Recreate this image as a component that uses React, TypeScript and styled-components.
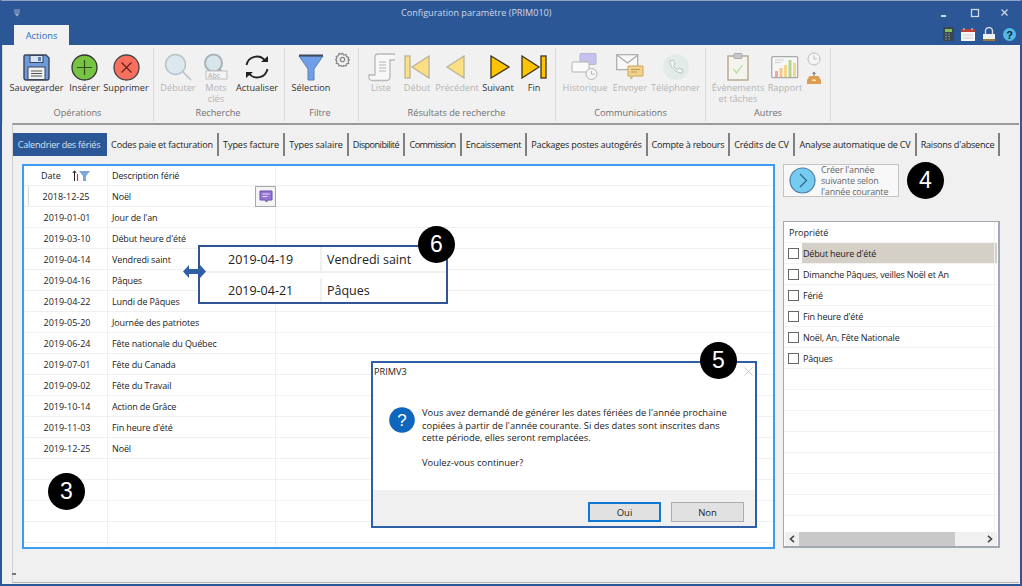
import React from "react";
import styled, { createGlobalStyle } from "styled-components";

const Global = createGlobalStyle`
  html, body { margin: 0; padding: 0; background: #f0f0f0; overflow: hidden; }
  #root { width: 1022px; height: 586px; }
  * { box-sizing: border-box; }
`;

const FONT = `"Open Sans", "Noto Sans", "Liberation Sans", sans-serif`;

const Page = styled.div`
  position: relative;
  width: 1022px;
  height: 586px;
  overflow: hidden;
  font-family: ${FONT};
  font-size: 9px;
  color: #222;
`;
const Win = styled.div`
  width: 100%;
  height: 100%;
  display: flex;
  flex-direction: column;
  background: #f0f0f0;
  border: 2px solid #2b5797;
  border-top: 1px solid #8fa3c4;
`;
const Header = styled.div`
  height: 44px;
  background: #2b5797;
  display: flex;
  flex-direction: column;
`;
const TitleRow = styled.div`
  height: 23px;
  display: flex;
  align-items: center;
  padding-left: 11px;
  color: #d5deec;
  position: relative;
`;
const Title = styled.div`
  margin-left: 380px;
  font-size: 9.1px;
  white-space: nowrap;
  color: #cfd9e8;
`;
const WinControls = styled.div`
  margin-left: auto;
  display: flex;
  align-items: center;
  gap: 16px;
  padding-right: 8px;
`;
const TabRow = styled.div`
  flex: 1;
  display: flex;
  align-items: flex-end;
  padding-left: 12px;
  padding-right: 4px;
`;
const ActionsTab = styled.div`
  width: 55px;
  height: 20px;
  background: #f1f1f1;
  color: #2b6fc4;
  font-size: 9.3px;
  display: flex;
  align-items: center;
  justify-content: center;
`;
const HelpIcons = styled.div`
  margin-left: auto;
  display: flex;
  gap: 7px;
  align-items: center;
  height: 20px;
  margin-bottom: 1px;
`;
const Ribbon = styled.div`
  height: 78px;
  background: #f1f1f1;
  display: flex;
  align-items: stretch;
  padding-left: 0;
  border-left: 1px solid #d8d8d8;
`;
const Group = styled.div<{ $w: number; $pl: number }>`
  width: ${(p) => p.$w}px;
  padding-left: ${(p) => p.$pl}px;
  margin: 3px 0 2px;
  border-right: 1px solid #dcdcdc;
  display: flex;
  flex-direction: column;
`;
const GroupButtons = styled.div`
  height: 58px;
  padding-top: 4px;
  display: flex;
`;
const GroupLabel = styled.div`
  flex: 1;
  text-align: center;
  color: #707070;
  font-size: 9.2px;
  line-height: 14px;
  margin-left: -6px;
`;
const RibbonBtn = styled.div<{ $w: number; $off?: boolean }>`
  width: ${(p) => p.$w}px;
  display: flex;
  flex-direction: column;
  align-items: center;
  color: ${(p) => (p.$off ? "#b4b4b4" : "#333")};
`;
const IconBox = styled.div`
  height: 30px;
  width: 30px;
  display: flex;
  align-items: center;
  justify-content: center;
  flex: none;
`;
const BtnLabel = styled.div`
  font-size: 9.2px;
  line-height: 11px;
  text-align: center;
  margin-top: 0;
  white-space: pre;
`;
const SmallCol = styled.div<{ $w: number }>`
  width: ${(p) => p.$w}px;
  display: flex;
  flex-direction: column;
  align-items: center;
  gap: 6px;
`;
const Body = styled.div`
  flex: 1;
  margin-left: 10px;
  margin-right: 1px;
  border-top: 2px solid #9a9a9a;
  border-bottom: 1px solid #b0b0b0;
  margin-bottom: 1px;
  min-height: 0;
  display: flex;
  flex-direction: column;
  position: relative;
  border-left: 1px solid #cfcfcf;
`;
const TabStrip = styled.div`
  margin-top: 8px;
  height: 23px;
  display: flex;
  flex: none;
`;
const TabItem = styled.div<{ $w: number; $ls: number; $active?: boolean }>`
  width: ${(p) => p.$w}px;
  display: flex;
  align-items: center;
  justify-content: center;
  white-space: nowrap;
  font-size: 9.1px;
  letter-spacing: ${(p) => p.$ls}px;
  background: ${(p) => (p.$active ? "#2b5797" : "transparent")};
  color: ${(p) => (p.$active ? "#d8e2f0" : "#222")};
  border-right: 2px solid ${(p) => (p.$active ? "#2b5797" : "#808080")};
`;
const Content = styled.div`
  padding: 8px 0 0 9px;
  display: flex;
  gap: 8px;
`;
const StatusMark = styled.div`
  position: absolute;
  left: -1px;
  bottom: 7px;
  width: 4px;
  height: 2px;
  background: #777;
`;
const TableFrame = styled.div`
  width: 753px;
  height: 385px;
  border: 2px solid #3c9cf2;
  background: #fff;
  overflow: hidden;
`;
const Row = styled.div<{ $h?: number }>`
  height: ${(p) => p.$h ?? 21}px;
  display: flex;
  border-bottom: 1px solid #f0f0f0;
`;
const DateCell = styled.div<{ $mark?: boolean }>`
  width: 84px;
  flex: none;
  display: flex;
  align-items: center;
  justify-content: center;
  padding-left: 3px;
  border-right: 1px solid #f0f0f0;
  position: relative;
  font-size: 9px;
  ${(p) => p.$mark && `padding-left: 1px; &::before { content: ""; position: absolute; left: 4px; top: 0; bottom: 0; width: 1px; background: #d8d8d8; }`}
`;
const DescCell = styled.div`
  width: 168px;
  flex: none;
  display: flex;
  align-items: center;
  padding-left: 4px;
  border-right: 1px solid #f0f0f0;
  position: relative;
  font-size: 9px;
  letter-spacing: -0.13px;
`;
const HeadDate = styled(DateCell)`
  justify-content: flex-start;
  padding-left: 17px;
  gap: 11px;
`;
const NoteButton = styled.div`
  position: absolute;
  right: -1px;
  top: 0;
  width: 21px;
  height: 21px;
  border: 1px solid #a8a8a8;
  background: #f4f4f4;
  display: flex;
  align-items: center;
  justify-content: center;
`;
const Side = styled.div`
  width: 217px;
  display: flex;
  flex-direction: column;
  gap: 24px;
`;
const CreateBtn = styled.div`
  width: 116px;
  height: 33px;
  border: 1px solid #c4c4c4;
  background: #f8f8f8;
  display: flex;
  align-items: center;
  gap: 5px;
  padding-left: 5px;
  color: #666;
  font-size: 9px;
  letter-spacing: -0.2px;
  line-height: 11px;
`;
const ListBox = styled.div`
  width: 217px;
  height: 327px;
  border: 1px solid #a2a9b2;
  border-bottom-width: 2px;
  border-right-width: 2px;
  background: #fff;
  display: flex;
  flex-direction: column;
  position: relative;
`;
const ListRows = styled.div`
  flex: 1;
  overflow: hidden;
  position: relative;
  margin-right: 1px;
  &::after {
    content: "";
    position: absolute;
    top: 0;
    bottom: 0;
    right: 2px;
    width: 1px;
    background: #f0f0f0;
  }
`;
const ListHead = styled.div`
  height: 21px;
  display: flex;
  align-items: center;
  padding-left: 5px;
  font-size: 9px;
  border-bottom: 1px solid #f4f4f4;
`;
const ListRow = styled.div`
  height: 21px;
  display: flex;
  align-items: center;
  padding-left: 4px;
  gap: 3px;
  border-bottom: 1px solid #f2f2f2;
`;
const Check = styled.span`
  width: 11px;
  height: 11px;
  flex: none;
  border: 1px solid #666;
  background: #fff;
`;
const ListText = styled.span<{ $sel?: boolean }>`
  flex: 1;
  height: 20px;
  display: flex;
  align-items: center;
  padding-left: 1px;
  font-size: 9px;
  letter-spacing: -0.18px;
  background: ${(p) => (p.$sel ? "#d4d0c8" : "transparent")};
`;
const ScrollBar = styled.div`
  height: 14px;
  background: #f0f0f0;
  display: flex;
  align-items: center;
  flex: none;
  margin: 0 1px;
`;
const ScrollArrow = styled.div`
  width: 14px;
  display: flex;
  align-items: center;
  justify-content: center;
  flex: none;
`;
const ScrollThumb = styled.div`
  width: 156px;
  height: 14px;
  background: #c9c9c9;
`;
const ScrollRest = styled.div`
  flex: 1;
`;
const Badge = styled.div<{ $x: number; $y: number }>`
  position: absolute;
  left: ${(p) => p.$x - 18}px;
  top: ${(p) => p.$y - 18}px;
  width: 37px;
  height: 37px;
  border-radius: 50%;
  background: #000;
  color: #fff;
  font-family: "Liberation Sans", Arial, sans-serif;
  font-size: 23px;
  display: flex;
  align-items: center;
  justify-content: center;
  z-index: 5;
`;
const Callout = styled.div`
  position: absolute;
  left: 198px;
  top: 245px;
  width: 250px;
  height: 59px;
  background: #fff;
  border: 2px solid #2f5597;
  z-index: 3;
  display: flex;
  flex-direction: column;
`;
const CalloutRow = styled.div`
  flex: 1;
  display: flex;
  font-size: 12.5px;
  &:first-child {
    border-bottom: 2px solid #f0f0f0;
  }
  &:last-child {
    padding-top: 5px;
  }
`;
const CalloutDate = styled.div`
  width: 122px;
  border-right: 2px solid #f0f0f0;
  display: flex;
  align-items: center;
  padding-left: 28px;
`;
const CalloutDesc = styled.div`
  display: flex;
  align-items: center;
  padding-left: 5px;
`;
const ArrowWrap = styled.div`
  position: absolute;
  left: 183px;
  top: 265px;
  z-index: 4;
  line-height: 0;
`;
const Dialog = styled.div`
  position: absolute;
  left: 371px;
  top: 361px;
  width: 386px;
  height: 167px;
  background: #fff;
  border: 2px solid #2f5fa5;
  z-index: 3;
  display: flex;
  flex-direction: column;
`;
const DlgTitle = styled.div`
  height: 16px;
  flex: none;
  display: flex;
  align-items: center;
  justify-content: space-between;
  padding: 0 2px 0 1px;
  font-size: 9.2px;
`;
const DlgBody = styled.div`
  flex: 1;
  display: flex;
  padding: 28px 0 0 16px;
  gap: 7px;
`;
const DlgText = styled.div`
  font-size: 9.4px;
  line-height: 12.6px;
  white-space: pre;
`;
const DlgFooter = styled.div`
  height: 36px;
  flex: none;
  background: #f0f0f0;
  display: flex;
  justify-content: flex-end;
  gap: 10px;
  padding: 12px 11px 0 0;
`;
const DlgBtn = styled.div<{ $primary?: boolean }>`
  width: 73px;
  height: 20px;
  background: #e1e1e1;
  border: ${(p) => (p.$primary ? "2px solid #0f78d4" : "1.5px solid #adadad")};
  display: flex;
  align-items: center;
  justify-content: center;
  font-size: 9.5px;
`;

const Save = () => (
  <svg width="27" height="27" viewBox="0 0 27 27">
    <path d="M2 1h21l3 3v20a2 2 0 0 1-2 2H3a2 2 0 0 1-2-2V2z" fill="#6e9bdc" stroke="#39465c" strokeWidth="1.4" />
    <rect x="7" y="1.5" width="13" height="7" fill="#d9e4f2" stroke="#39465c" />
    <rect x="15" y="3" width="3" height="4" fill="#5a7fb0" />
    <rect x="5" y="13" width="17" height="12.5" fill="#f2f2f2" stroke="#39465c" />
    <path d="M8 17h11M8 19.5h11M8 22h11" stroke="#555" />
  </svg>
);
const Plus = () => (
  <svg width="27" height="27" viewBox="0 0 27 27">
    <circle cx="13.5" cy="13.5" r="12.5" fill="#76c442" stroke="#333" strokeWidth="1.3" />
    <path d="M13.5 6v15M6 13.5h15" stroke="#2d4d1a" strokeWidth="1.2" />
  </svg>
);
const Cross = () => (
  <svg width="27" height="27" viewBox="0 0 27 27">
    <circle cx="13.5" cy="13.5" r="12.5" fill="#f76f5e" stroke="#444" strokeWidth="1.3" />
    <path d="M8.5 8.5l10 10M18.5 8.5l-10 10" stroke="#5c2018" strokeWidth="1.1" />
  </svg>
);
const Mag = () => (
  <svg width="28" height="28" viewBox="0 0 28 28">
    <circle cx="11.5" cy="11.5" r="10" fill="#dbe9ee" stroke="#b5c3c9" strokeWidth="1.4" />
    <path d="M18.5 18.5L27 27" stroke="#bdbdbd" strokeWidth="1.4" />
  </svg>
);
const MagAbc = () => (
  <svg width="28" height="28" viewBox="0 0 28 28">
    <circle cx="11.5" cy="10" r="8.5" fill="#d8e6ec" stroke="#a9b3b8" strokeWidth="2" />
    <path d="M17 16l7 7" stroke="#a8a8a8" strokeWidth="2.4" />
    <rect x="4" y="18" width="21" height="8" fill="#f4f4f4" stroke="#c0c0c0" />
    <text x="6" y="25" fontSize="7" fill="#aaa" fontFamily="Open Sans">Abc</text>
  </svg>
);
const Refresh = () => (
  <svg width="26" height="26" viewBox="0 0 26 26" fill="none">
    <path d="M2.5 11A10.5 10.5 0 0 1 21 6.5" stroke="#222" strokeWidth="1.8" />
    <path d="M23.5 15A10.5 10.5 0 0 1 5 19.5" stroke="#222" strokeWidth="1.8" />
    <path d="M17 8h7V2z" fill="#222" />
    <path d="M9 18H2v6z" fill="#222" />
  </svg>
);
const Funnel = () => (
  <svg width="26" height="27" viewBox="0 0 26 27">
    <path d="M1 2h24l-9 13v11h-6V15z" fill="#6f9fe6" stroke="#5a7fb5" />
    <path d="M1 1.5h24" stroke="#3c4a5e" strokeWidth="2" />
  </svg>
);
const Gear = () => (
  <svg width="15" height="15" viewBox="0 0 24 24" fill="none" stroke="#888" strokeWidth="2">
    <circle cx="12" cy="12" r="3.5" />
    <path d="M12 2l2 3 3.5-1 1 3.5 3.5 1-1 3.5 2 .5-2 2 1 3.5-3.500 1-1 3.500-3.500-1-2 3-2-3-3.500 1-1-3.500-3.500-1 1-3.500-2-2 2-2.500-1-3 3.500-1 1-3.500 3.500 1z" />
  </svg>
);
const Scroll = () => (
  <svg width="27" height="29" viewBox="0 0 27 29" fill="none" stroke="#b8b8b8" strokeWidth="1.3">
    <path d="M7 22V4a3 3 0 0 1 3-3h15a2 2 0 0 1 0 6h-3v17a3.500 3.500 0 0 1-3.500 3.500H4A3 3 0 0 1 1 24.500V22z" fill="#f8f8f8" />
    <path d="M11 9h7M11 12h7M11 15h7M11 18h7" stroke="#ccc" />
  </svg>
);
const Nav = ({ kind, dim }: { kind: "first" | "prev" | "next" | "last"; dim?: boolean }) => {
  const fill = dim ? "#fbdf85" : "#ffc300";
  const stroke = dim ? "#b9b39a" : "#3d3518";
  return (
    <svg width="26" height="24" viewBox="0 0 26 24" stroke={stroke} strokeWidth="1.3" fill={fill}>
      {kind === "first" && (<><rect x="1" y="1" width="5" height="22" /><path d="M25 1L8 12l17 11z" /></>)}
      {kind === "prev" && <path d="M20 1L3 12l17 11z" />}
      {kind === "next" && <path d="M6 1l18 11L6 23z" />}
      {kind === "last" && (<><path d="M1 1l17 11L1 23z" /><rect x="20" y="1" width="5" height="22" /></>)}
    </svg>
  );
};
const History = () => (
  <svg width="28" height="28" viewBox="0 0 28 28">
    <rect x="9" y="0.500" width="16" height="11" rx="1" fill="#c6c2ee" stroke="#b8b8d0" />
    <rect x="1" y="9" width="17" height="10" rx="1" fill="#fafafa" stroke="#b3b3b3" />
    <circle cx="20.500" cy="21" r="5.500" fill="#f5f5f5" stroke="#b3b3b3" />
    <path d="M20.500 18v3h3" stroke="#b3b3b3" fill="none" />
  </svg>
);
const Mail = () => (
  <svg width="28" height="26" viewBox="0 0 28 26">
    <rect x="0.700" y="0.700" width="21" height="15" fill="#f8f8f8" stroke="#aaa" strokeWidth="1.2" />
    <path d="M1 1l10.500 8L22 1" stroke="#aaa" fill="none" strokeWidth="1.200" />
    <path d="M12 12h15v10H17l-2 3v-3h-3z" fill="#f3d28c" stroke="#c9a65a" />
    <path d="M15 15.500h9M15 18h6" stroke="#b89a5a" />
  </svg>
);
const Phone = () => (
  <svg width="26" height="26" viewBox="0 0 26 26">
    <circle cx="13" cy="13" r="13" fill="#e3ebe9" />
    <path d="M7 7l3-1 2 4-1.500 1.500c.8 2 2.200 3.400 4 4.200L16 14l4 2-1 3c-5 .5-12.500-6-12-12z" fill="#f6f8f7" stroke="#b9c2c0" />
  </svg>
);
const Clipboard = () => (
  <svg width="22" height="28" viewBox="0 0 22 28">
    <rect x="1" y="3" width="20" height="24" fill="#f5f3ee" stroke="#bfae98" strokeWidth="1.600" />
    <rect x="7" y="0.500" width="8" height="5" rx="1" fill="#c4c8cc" stroke="#aaa" />
    <path d="M6.500 16l3 4 6-8" stroke="#a7dc93" strokeWidth="1.200" fill="none" />
  </svg>
);
const ReportIcon = () => (
  <svg width="28" height="23" viewBox="0 0 28 23">
    <rect x="0.700" y="0.700" width="26" height="21" rx="1" fill="#f6f6f6" stroke="#aaa" strokeWidth="1.300" />
    <path d="M4 4h9M4 6.500h6" stroke="#ccc" />
    <rect x="4" y="15" width="3" height="6" fill="#eba7a0" />
    <rect x="8.500" y="12" width="3" height="9" fill="#f2c78c" />
    <rect x="13" y="9" width="3" height="12" fill="#f2d88a" />
    <rect x="17.500" y="4" width="3" height="17" fill="#b5d690" />
    <rect x="22" y="7" width="3" height="14" fill="#f2d88a" />
  </svg>
);
const Clock = () => (
  <svg width="14" height="14" viewBox="0 0 14 14" fill="none" stroke="#bbb">
    <circle cx="7" cy="7" r="6" fill="#f5f5f5" />
    <path d="M7 3.500V7h3" />
  </svg>
);
const Tray = () => (
  <svg width="14" height="12" viewBox="0 0 14 12">
    <path d="M7 0v4M5.500 2L7 .5 8.500 2" stroke="#666" fill="none" />
    <path d="M2.500 4h9L14 8v4H0V8z" fill="#dd9f4f" />
    <rect x="5" y="7.500" width="4" height="1.500" fill="#fbe4c0" />
  </svg>
);
const SortFilter = () => (
  <svg width="18" height="11" viewBox="0 0 18 11">
    <path d="M2.500 11V1M.8 3L2.500 .8 4.200 3" stroke="#222" fill="none" />
    <path d="M5.500 11V4" stroke="#d33" strokeWidth="1.200" />
    <path d="M7 1h11l-4 5v5h-3V6z" fill="#7ba7da" />
  </svg>
);
const Note = () => (
  <svg width="14" height="13" viewBox="0 0 14 13">
    <path d="M1 1h12v9H9l-1.500 2L6 10H1z" fill="#9575d6" stroke="#6a4fa8" />
    <path d="M3.500 4h7M3.500 6.500h5" stroke="#e7defa" />
  </svg>
);
const DoubleArrow = () => (
  <svg width="23" height="13" viewBox="0 0 23 13">
    <path d="M0 6.500L6 0v4h11V0l6 6.500L17 13V9H6v4z" fill="#2f5fa5" />
  </svg>
);
const QuestionIcon = () => (
  <svg width="26" height="26" viewBox="0 0 26 26">
    <circle cx="13" cy="13" r="12.800" fill="#0f66bd" />
    <text x="13" y="19" textAnchor="middle" fontSize="17" fill="#fff" fontFamily="Liberation Sans">?</text>
  </svg>
);
const CreateIcon = () => (
  <svg width="27" height="27" viewBox="0 0 27 27" fill="none">
    <circle cx="13.500" cy="13.500" r="12.500" fill="#74cdf1" stroke="#4d7da3" strokeWidth="1.200" />
    <path d="M11 7l6.500 6.500L11 20" stroke="#2d5f85" strokeWidth="1.100" />
  </svg>
);
const Chevron = ({ right }: { right?: boolean }) => (
  <svg width="6" height="8" viewBox="0 0 6 8" fill="none">
    <path d={right ? "M1 .8L4.500 4 1 7.200" : "M5 .8L1.500 4 5 7.200"} stroke="#444" strokeWidth="1.600" />
  </svg>
);
const QatIcon = () => (
  <svg width="8" height="8" viewBox="0 0 8 8">
    <path d="M1 1h6M1 3h6" stroke="#9fb2cd" />
    <path d="M1.500 4.500h5L4 7.500z" fill="#9fb2cd" />
  </svg>
);
const MinIcon = () => (
  <svg width="14" height="10" viewBox="0 0 14 10"><rect x="3" y="7" width="5" height="2" fill="#cfd9e8" /></svg>
);
const MaxIcon = () => (
  <svg width="14" height="10" viewBox="0 0 14 10" fill="none"><rect x="3.500" y="1.500" width="7" height="7" stroke="#cfd9e8" strokeWidth="1.300" /></svg>
);
const CloseIcon = () => (
  <svg width="14" height="10" viewBox="0 0 14 10" fill="none"><path d="M3.500 1.500l6 6M9.500 1.500l-6 6" stroke="#cfd9e8" strokeWidth="1.200" /></svg>
);
const CalcIcon = () => (
  <svg width="11" height="14" viewBox="0 0 11 14">
    <rect width="11" height="14" rx="1" fill="#3a4650" />
    <rect x="2" y="2" width="7" height="3" fill="#7fc25c" />
    <path d="M2 7h2M5 7h2M2 9.500h2M5 9.500h2M2 12h2M5 12h2" stroke="#7d8a93" />
  </svg>
);
const CalIcon = () => (
  <svg width="14" height="13" viewBox="0 0 14 13">
    <rect y="1" width="14" height="12" fill="#f6f6f6" />
    <rect y="1" width="14" height="3" fill="#b8443a" />
    <path d="M3 0v2M11 0v2" stroke="#ddd" />
    <path d="M2 7h10M2 10h10" stroke="#ccc" />
  </svg>
);
const LockIcon = () => (
  <svg width="14" height="14" viewBox="0 0 14 14">
    <path d="M3.500 7V4a3.500 3.500 0 0 1 7 0v3" stroke="#d5dde8" fill="none" strokeWidth="1.400" />
    <rect x="1" y="7" width="12" height="5" fill="#eef1f5" />
    <rect x="1" y="12" width="12" height="2" fill="#9a7a3c" />
  </svg>
);
const HelpIcon = () => (
  <svg width="13" height="13" viewBox="0 0 13 13">
    <circle cx="6.500" cy="6.500" r="6.500" fill="#54b9e8" />
    <text x="6.500" y="10.500" textAnchor="middle" fontSize="11" fontWeight="700" fill="#123" fontFamily="Liberation Sans">?</text>
  </svg>
);
const DlgClose = () => (
  <svg width="9" height="9" viewBox="0 0 9 9" fill="none"><path d="M.5.500l8 8M8.500.500l-8 8" stroke="#c8c8c8" /></svg>
);

const TABS: [string, number, number][] = [
  ["Calendrier des fériés", 94, -0.24],
  ["Codes paie et facturation", 112, -0.18],
  ["Types facture", 66, -0.08],
  ["Types salaire", 64, -0.08],
  ["Disponibilité", 56, -0.5],
  ["Commission", 57, -0.65],
  ["Encaissement", 65, -0.25],
  ["Packages postes autogérés", 121, -0.16],
  ["Compte à rebours", 82, -0.25],
  ["Crédits de CV", 65, -0.15],
  ["Analyse automatique de CV", 122, -0.2],
  ["Raisons d'absence", 83, -0.24],
];
const ROWS: [string, string][] = [
  ["2018-12-25", "Noël"],
  ["2019-01-01", "Jour de l'an"],
  ["2019-03-10", "Début heure d'été"],
  ["2019-04-14", "Vendredi saint"],
  ["2019-04-16", "Pâques"],
  ["2019-04-22", "Lundi de Pâques"],
  ["2019-05-20", "Journée des patriotes"],
  ["2019-06-24", "Fête nationale du Québec"],
  ["2019-07-01", "Fête du Canada"],
  ["2019-09-02", "Fête du Travail"],
  ["2019-10-14", "Action de Grâce"],
  ["2019-11-03", "Fin heure d'été"],
  ["2019-12-25", "Noël"],
  ["", ""],
  ["", ""],
  ["", ""],
  ["", ""],
  ["", ""],
];
const PROPS = [
  "Début heure d'été",
  "Dimanche Pâques, veilles Noël et An",
  "Férié",
  "Fin heure d'été",
  "Noël, An, Fête Nationale",
  "Pâques",
  "", "", "", "", "", "", "",
];

type BtnProps = { w: number; label: string; off?: boolean; children: React.ReactNode };
const Btn = ({ w, label, off, children }: BtnProps) => (
  <RibbonBtn $w={w} $off={off}>
    <IconBox>{children}</IconBox>
    <BtnLabel>{label}</BtnLabel>
  </RibbonBtn>
);

export default function App() {
  return (
    <Page>
      <Global />
      <Win>
        <Header>
          <TitleRow>
            <QatIcon />
            <Title>Configuration paramètre (PRIM010)</Title>
            <WinControls>
              <MinIcon />
              <MaxIcon />
              <CloseIcon />
            </WinControls>
          </TitleRow>
          <TabRow>
            <ActionsTab>Actions</ActionsTab>
            <HelpIcons>
              <CalcIcon />
              <CalIcon />
              <LockIcon />
              <HelpIcon />
            </HelpIcons>
          </TabRow>
        </Header>
        <Ribbon>
          <Group $w={151} $pl={5}>
            <GroupButtons>
              <Btn w={57} label="Sauvegarder"><Save /></Btn>
              <Btn w={39} label="Insérer"><Plus /></Btn>
              <Btn w={44} label="Supprimer"><Cross /></Btn>
            </GroupButtons>
            <GroupLabel>Opérations</GroupLabel>
          </Group>
          <Group $w={131} $pl={4}>
            <GroupButtons>
              <Btn w={40} label="Débuter" off><Mag /></Btn>
              <Btn w={36} label={"Mots\nclés"} off><MagAbc /></Btn>
              <Btn w={46} label="Actualiser"><Refresh /></Btn>
            </GroupButtons>
            <GroupLabel>Recherche</GroupLabel>
          </Group>
          <Group $w={74} $pl={3}>
            <GroupButtons>
              <Btn w={46} label="Sélection"><Funnel /></Btn>
              <SmallCol $w={16}><Gear /></SmallCol>
            </GroupButtons>
            <GroupLabel>Filtre</GroupLabel>
          </Group>
          <Group $w={197} $pl={5}>
            <GroupButtons>
              <Btn w={34} label="Liste" off><Scroll /></Btn>
              <Btn w={38} label="Début" off><Nav kind="first" dim /></Btn>
              <Btn w={42} label="Précédent" off><Nav kind="prev" dim /></Btn>
              <Btn w={40} label="Suivant"><Nav kind="next" /></Btn>
              <Btn w={32} label="Fin"><Nav kind="last" /></Btn>
            </GroupButtons>
            <GroupLabel>Résultats de recherche</GroupLabel>
          </Group>
          <Group $w={150} $pl={6}>
            <GroupButtons>
              <Btn w={46} label="Historique" off><History /></Btn>
              <Btn w={44} label="Envoyer" off><Mail /></Btn>
              <Btn w={47} label="Téléphoner" off><Phone /></Btn>
            </GroupButtons>
            <GroupLabel>Communications</GroupLabel>
          </Group>
          <Group $w={125} $pl={6}>
            <GroupButtons>
              <Btn w={52} label={"Évènements\net tâches"} off><Clipboard /></Btn>
              <Btn w={42} label="Rapport" off><ReportIcon /></Btn>
              <SmallCol $w={16}>
                <Clock />
                <Tray />
              </SmallCol>
            </GroupButtons>
            <GroupLabel>Autres</GroupLabel>
          </Group>
        </Ribbon>
        <Body>
          <TabStrip>
            {TABS.map(([t, w, ls], i) => (
              <TabItem key={t} $w={w} $ls={ls} $active={i === 0}>{t}</TabItem>
            ))}
          </TabStrip>
          <Content>
            <TableFrame>
              <Row $h={20}>
                <HeadDate>
                  <span>Date</span>
                  <SortFilter />
                </HeadDate>
                <DescCell>Description férié</DescCell>
              </Row>
              {ROWS.map(([d, n], i) => (
                <Row key={i}>
                  <DateCell $mark={i === 0}>{d}</DateCell>
                  <DescCell>
                    {n}
                    {i === 0 && (
                      <NoteButton>
                        <Note />
                      </NoteButton>
                    )}
                  </DescCell>
                </Row>
              ))}
            </TableFrame>
            <Side>
              <CreateBtn>
                <CreateIcon />
                <span>
                  Créer l'année
                  <br />
                  suivante selon
                  <br />
                  l'année courante
                </span>
              </CreateBtn>
              <ListBox>
                <ListRows>
                  <ListHead>Propriété</ListHead>
                  {PROPS.map((p, i) => (
                    <ListRow key={i}>
                      {p && <Check />}
                      {p && <ListText $sel={i === 0}>{p}</ListText>}
                    </ListRow>
                  ))}
                </ListRows>
                <ScrollBar>
                  <ScrollArrow><Chevron /></ScrollArrow>
                  <ScrollThumb />
                  <ScrollRest />
                  <ScrollArrow><Chevron right /></ScrollArrow>
                </ScrollBar>
              </ListBox>
            </Side>
          </Content>
          <StatusMark />
        </Body>
      </Win>
      <Callout>
        <CalloutRow>
          <CalloutDate>2019-04-19</CalloutDate>
          <CalloutDesc>Vendredi saint</CalloutDesc>
        </CalloutRow>
        <CalloutRow>
          <CalloutDate>2019-04-21</CalloutDate>
          <CalloutDesc>Pâques</CalloutDesc>
        </CalloutRow>
      </Callout>
      <ArrowWrap><DoubleArrow /></ArrowWrap>
      <Dialog>
        <DlgTitle>
          <span>PRIMV3</span>
          <DlgClose />
        </DlgTitle>
        <DlgBody>
          <QuestionIcon />
          <DlgText>{"Vous avez demandé de générer les dates fériées de l'année prochaine\ncopiées à partir de l'année courante. Si des dates sont inscrites dans\ncette période, elles seront remplacées.\n\nVoulez-vous continuer?"}</DlgText>
        </DlgBody>
        <DlgFooter>
          <DlgBtn $primary>Oui</DlgBtn>
          <DlgBtn>Non</DlgBtn>
        </DlgFooter>
      </Dialog>
      <Badge $x={66} $y={491}>3</Badge>
      <Badge $x={925} $y={180}>4</Badge>
      <Badge $x={718} $y={360}>5</Badge>
      <Badge $x={436} $y={244}>6</Badge>
    </Page>
  );
}
